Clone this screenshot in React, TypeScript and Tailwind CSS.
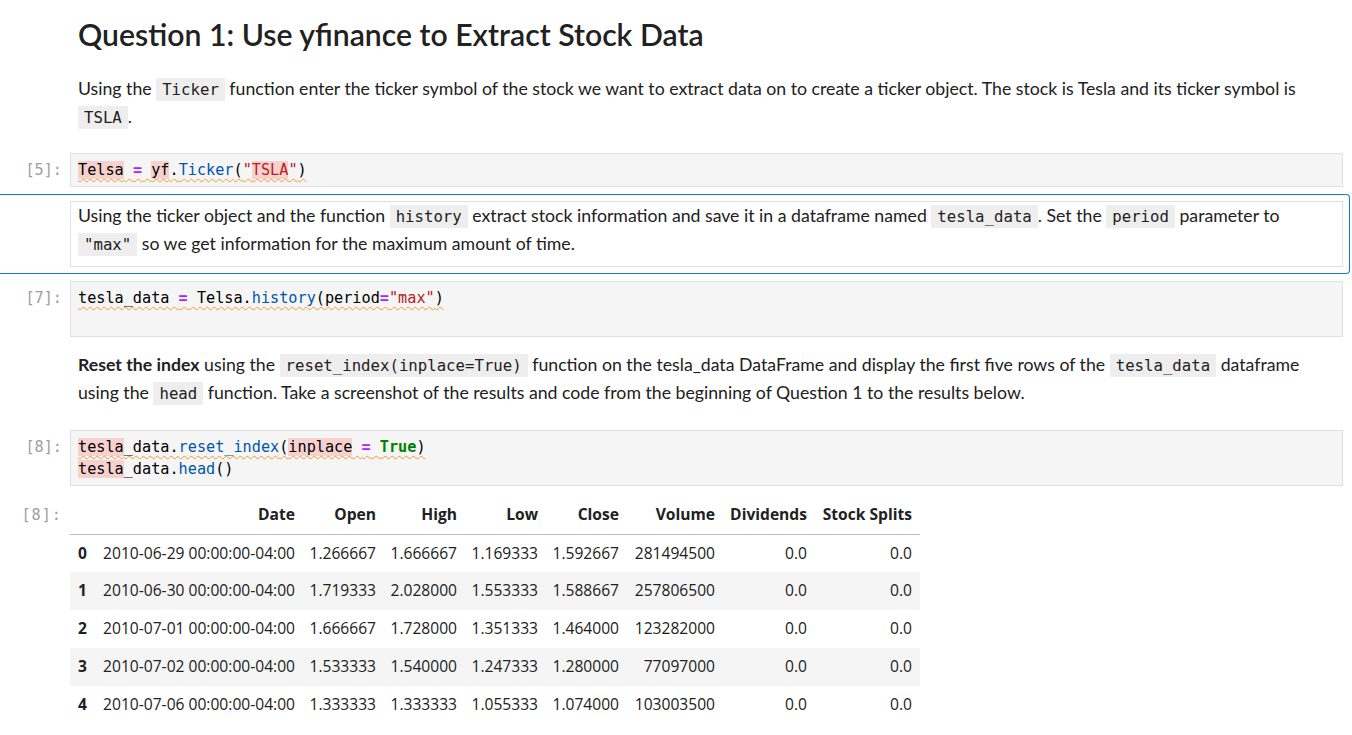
import React from "react";

const MONO = "font-['DejaVu_Sans_Mono',monospace]";

function Hl({ children }: { children: React.ReactNode }) {
  return <span className="bg-[#f7d0d0]">{children}</span>;
}
function Op({ children }: { children: React.ReactNode }) {
  return <span className="font-bold text-[#aa22ff]">{children}</span>;
}
function Str({ children }: { children: React.ReactNode }) {
  return <span className="text-[#ba2121]">{children}</span>;
}
function Attr({ children }: { children: React.ReactNode }) {
  return <span className="text-[#0055aa]">{children}</span>;
}
function Wavy({ children }: { children: React.ReactNode }) {
  return (
    <span className="underline decoration-wavy decoration-[#f29a2e] decoration-1 underline-offset-[3px]">
      {children}
    </span>
  );
}
function Code({ children }: { children: React.ReactNode }) {
  return (
    <code className={`${MONO} bg-[#eeeeee] px-[6px] py-[2px] text-[15.7px] leading-[18px] text-[#212121]`}>
      {children}
    </code>
  );
}

function Prompt({ n, className = "" }: { n: number; className?: string }) {
  return (
    <div
      className={`${MONO} w-[70px] shrink-0 pr-[8px] text-right text-[15.2px] text-[#9e9e9e] ${className}`}
    >
      [{n}]:
    </div>
  );
}

function CodeCell({ n, lines }: { n: number; lines: React.ReactNode[] }) {
  return (
    <div className="flex pr-[9px]">
      <Prompt n={n} className="pt-[6px] leading-[22px]" />
      <div
        className={`${MONO} flex-1 border border-[#e0e0e0] bg-[#f5f5f5] px-[7px] py-[5px] text-[15.2px] leading-[22px] text-black whitespace-pre`}
      >
        {lines.map((l, i) => (
          <div key={i} className="h-[22px]">
            {l}
          </div>
        ))}
      </div>
    </div>
  );
}

const rows = [
  ["0", "2010-06-29 00:00:00-04:00", "1.266667", "1.666667", "1.169333", "1.592667", "281494500", "0.0", "0.0"],
  ["1", "2010-06-30 00:00:00-04:00", "1.719333", "2.028000", "1.553333", "1.588667", "257806500", "0.0", "0.0"],
  ["2", "2010-07-01 00:00:00-04:00", "1.666667", "1.728000", "1.351333", "1.464000", "123282000", "0.0", "0.0"],
  ["3", "2010-07-02 00:00:00-04:00", "1.533333", "1.540000", "1.247333", "1.280000", "77097000", "0.0", "0.0"],
  ["4", "2010-07-06 00:00:00-04:00", "1.333333", "1.333333", "1.055333", "1.074000", "103003500", "0.0", "0.0"],
];
const headers = ["", "Date", "Open", "High", "Low", "Close", "Volume", "Dividends", "Stock Splits"];
const colWidths = ["w-[25px]", "w-[208px]", "w-[81px]", "w-[81px]", "w-[81px]", "w-[81px]", "w-[96px]", "w-[92px]", "w-[105px]"];

export default function App() {
  return (
    <div className="min-h-screen w-full overflow-hidden bg-white pt-[16px] font-['Lato',sans-serif] text-[#212121]">
      {/* Heading */}
      <div className="pl-[78px]">
        <h1 className="text-[30.2px] font-semibold leading-[36px]">Question 1: Use yfinance to Extract Stock Data</h1>
      </div>

      <div className="mt-[23px] pl-[78px] pr-[20px] text-[17.7px] leading-[28px]">
        Using the <Code>Ticker</Code> function enter the ticker symbol of the stock we want to extract data on to
        create a ticker object. The stock is Tesla and its ticker symbol is
        <br />
        <Code>TSLA</Code>.
      </div>

      <div className="mt-[22px]">
        <CodeCell
          n={5}
          lines={[
            <Wavy>
              <Hl>Telsa</Hl> <Op>=</Op> <Hl>yf</Hl>.<Attr>Ticker</Attr>(
              <Str>
                "<Hl>TSLA</Hl>"
              </Str>
              )
            </Wavy>,
          ]}
        />
      </div>

      {/* Selected markdown cell in edit mode */}
      <div className="mt-[7px] mr-[2px] rounded-r-[4px] border-y border-r border-[#1976d2] py-[6px] pl-[70px] pr-[6px]">
        <div className="border border-[#e0e0e0] bg-white pb-[8px] pl-[7px] text-[17.7px] leading-[28px]">
          Using the ticker object and the function <Code>history</Code> extract stock information and save it in a
          dataframe named <Code>tesla_data</Code>. Set the <Code>period</Code> parameter to
          <br />
          <Code>"max"</Code> so we get information for the maximum amount of time.
        </div>
      </div>

      <div className="mt-[7px]">
        <CodeCell
          n={7}
          lines={[
            <Wavy>
              tesla_data <Op>=</Op> Telsa.<Attr>history</Attr>(period<Op>=</Op>
              <Str>"max"</Str>)
            </Wavy>,
            "",
          ]}
        />
      </div>

      <div className="mt-[14px] pl-[78px] pr-[20px] text-[17.7px] leading-[28px]">
        <b className="font-bold">Reset the index</b> using the <Code>reset_index(inplace=True)</Code> function on the
        tesla_data DataFrame and display the first five rows of the <Code>tesla_data</Code> dataframe
        <br />
        using the <Code>head</Code> function. Take a screenshot of the results and code from the beginning of Question
        1 to the results below.
      </div>

      <div className="mt-[23px]">
        <CodeCell
          n={8}
          lines={[
            <Wavy>
              <Hl>tesla</Hl>_data.<Attr>reset_index</Attr>(<Hl>inplace</Hl> <Op>=</Op>{" "}
              <span className="font-bold text-[#008000]">True</span>)
            </Wavy>,
            <>
              <Hl>tesla</Hl>_data.<Attr>head</Attr>()
            </>,
          ]}
        />
      </div>

      {/* Output */}
      <div className="mt-[10px] flex">
        <Prompt n={8} className="leading-[38px] tracking-[1px]" />
        <table className="w-[850px] table-fixed border-collapse font-['Open_Sans',sans-serif] text-[15.6px] text-[#212121]">
          <colgroup>
            {colWidths.map((w, i) => (
              <col key={i} className={w} />
            ))}
          </colgroup>
          <thead>
            <tr className="h-[38px] border-b border-[#bdbdbd]">
              {headers.map((h, i) => (
                <th key={i} className="h-[38px] whitespace-nowrap p-0 pr-[8px] text-right font-bold">
                  {h}
                </th>
              ))}
            </tr>
          </thead>
          <tbody>
            {rows.map((r, ri) => (
              <tr key={ri} className={`h-[38px] ${ri % 2 === 1 ? "bg-[#f5f5f5]" : "bg-white"}`}>
                {r.map((c, ci) =>
                  ci === 0 ? (
                    <th key={ci} className="h-[38px] p-0 pl-[8px] text-left font-bold">
                      {c}
                    </th>
                  ) : (
                    <td key={ci} className="h-[38px] whitespace-nowrap p-0 pr-[8px] text-right">
                      {c}
                    </td>
                  )
                )}
              </tr>
            ))}
          </tbody>
        </table>
      </div>
    </div>
  );
}
